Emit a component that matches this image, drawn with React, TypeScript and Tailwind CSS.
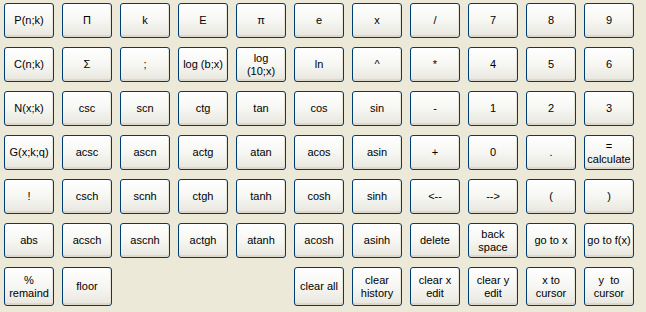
import React from 'react';

const rows: string[][] = [
  ['P(n;k)', 'Π', 'k', 'E', 'π', 'e', 'x', '/', '7', '8', '9'],
  ['C(n;k)', 'Σ', ';', 'log (b;x)', 'log\n(10;x)', 'ln', '^', '*', '4', '5', '6'],
  ['N(x;k)', 'csc', 'scn', 'ctg', 'tan', 'cos', 'sin', '-', '1', '2', '3'],
  ['G(x;k;q)', 'acsc', 'ascn', 'actg', 'atan', 'acos', 'asin', '+', '0', '.', '=\ncalculate'],
  ['!', 'csch', 'scnh', 'ctgh', 'tanh', 'cosh', 'sinh', '<--', '-->', '(', ')'],
  ['abs', 'acsch', 'ascnh', 'actgh', 'atanh', 'acosh', 'asinh', 'delete', 'back\nspace', 'go to x', 'go to f(x)'],
];

const lastRow = ['clear all', 'clear\nhistory', 'clear x\nedit', 'clear y\nedit', 'x to\ncursor', 'y  to\ncursor'];

function Key({ label, className = '' }: { label: string; className?: string }) {
  return (
    <button
      className={`flex items-center justify-center rounded-[3px] border border-[#003c74] bg-linear-to-b from-white via-[#f6f6f3] to-[#e8e6dd] shadow-[inset_0_-2px_0_#dcd8cc,inset_-1px_0_0_#e6e3d9] text-[11px] leading-[13px] text-black whitespace-pre text-center ${className}`}
    >
      {label}
    </button>
  );
}

export default function App() {
  return (
    <div
      className="w-[646px] h-[312px] bg-[#ece9d8] pl-1 pt-[3px]"
      style={{ fontFamily: '"Liberation Sans", Arial, sans-serif' }}
    >
      <div className="grid grid-cols-[repeat(11,50px)] grid-rows-[repeat(6,35px)_39px] gap-x-2 gap-y-[9px]">
        {rows.map((row, i) =>
          row.map((label, j) => <Key key={`${i}-${j}`} label={label} />)
        )}
        <Key label={'%\nremaind'} />
        <Key label="floor" />
        {lastRow.map((label, j) => (
          <Key key={`l-${j}`} label={label} className={j === 0 ? 'col-start-6' : ''} />
        ))}
      </div>
    </div>
  );
}
